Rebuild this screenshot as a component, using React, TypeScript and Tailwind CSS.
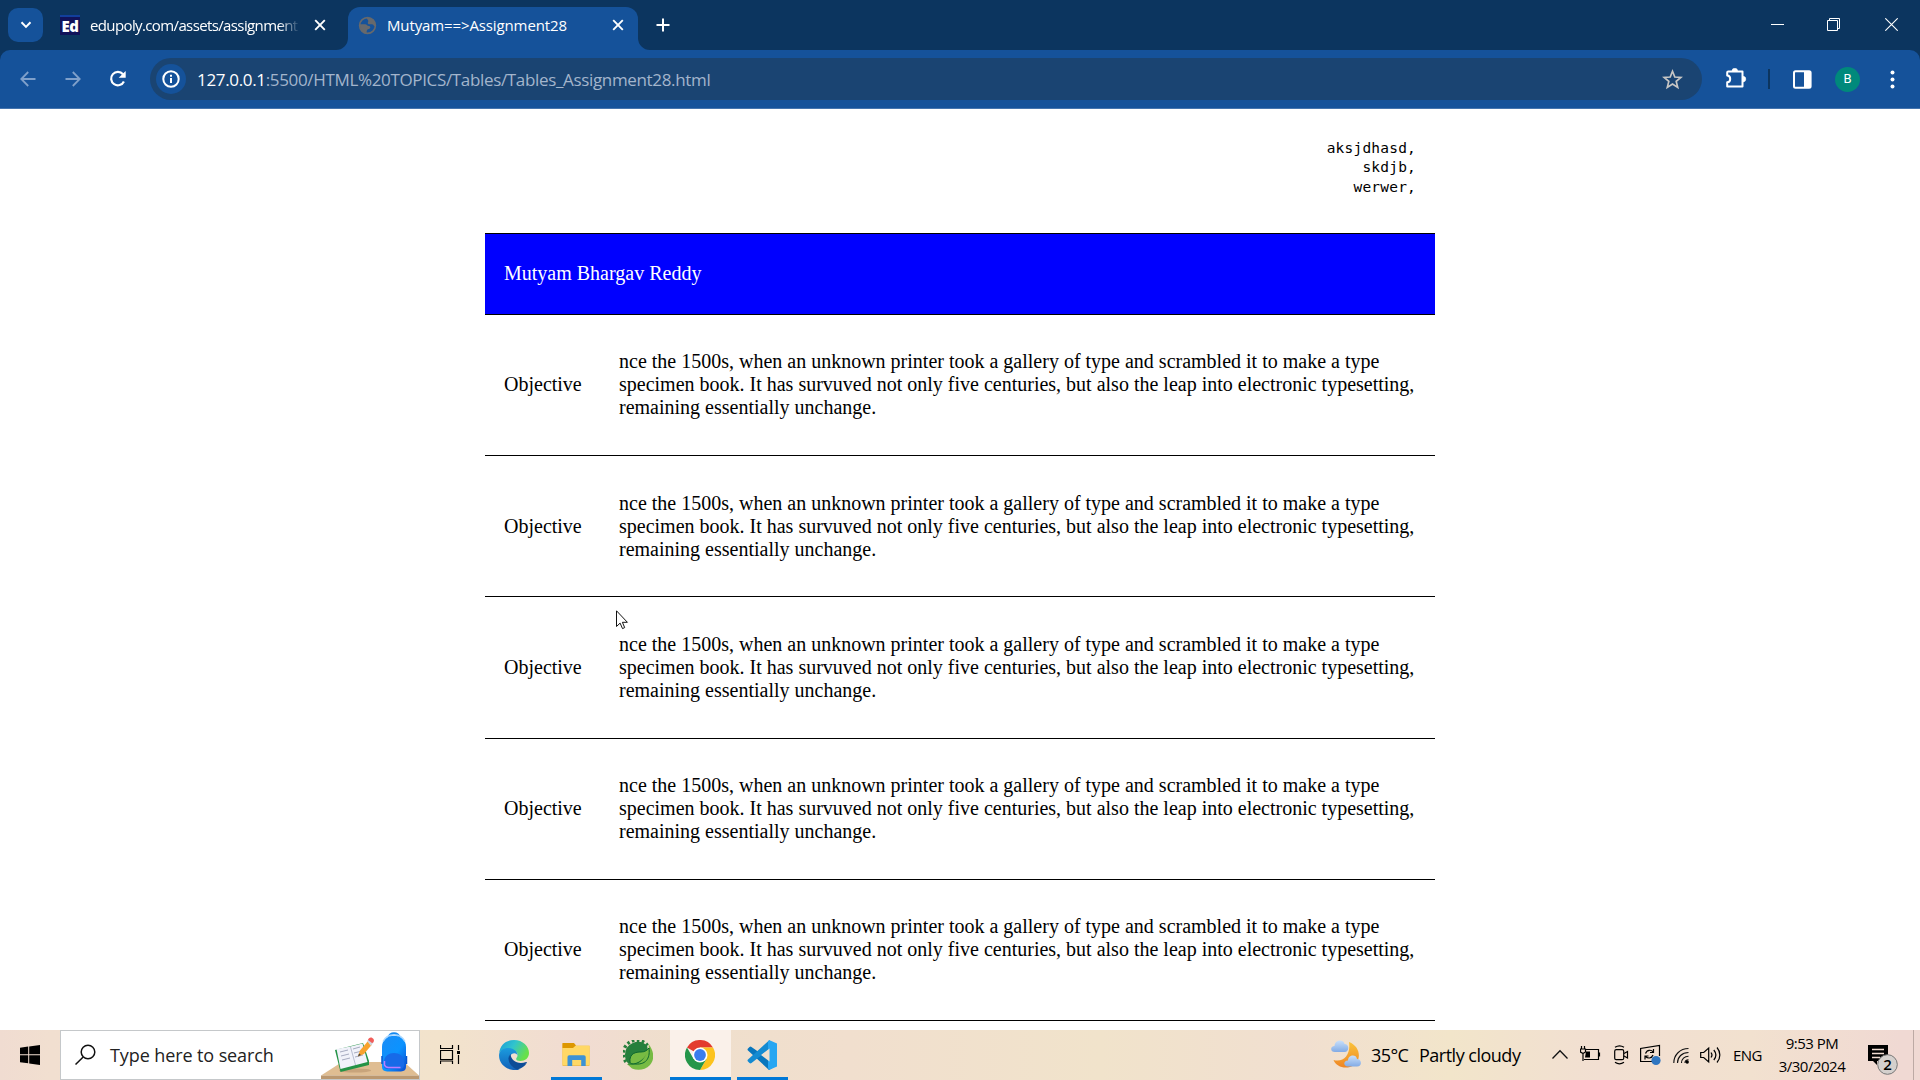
import React from "react";

const entry =
  "nce the 1500s, when an unknown printer took a gallery of type and scrambled it to make a type specimen book. It has survuved not only five centuries, but also the leap into electronic typesetting, remaining essentially unchange.";

const rows = [
  "h-[141px] pt-[35px]",
  "h-[141px] pt-[36px]",
  "h-[142px] pt-[36px]",
  "h-[141px] pt-[35px]",
  "h-[141px] pt-[35px]",
];

function CloseX({ className = "" }: { className?: string }) {
  return (
    <svg className={className} width="12" height="12" viewBox="0 0 12 12" fill="none" stroke="#fff" strokeWidth="1.9">
      <path d="M1.2 1.2 10.8 10.8M10.8 1.2 1.2 10.8" />
    </svg>
  );
}

function TabStrip() {
  return (
    <div className="flex h-[50px] shrink-0 bg-[#0c355f] text-white">
      <div className="ml-2 mt-2 flex h-[34px] w-[35px] items-center justify-center rounded-[10px] bg-[#15529a]">
        <svg width="12" height="8" viewBox="0 0 12 8" fill="none" stroke="#fff" strokeWidth="2">
          <path d="m1.5 1.3 4.5 4.6 4.5-4.6" />
        </svg>
      </div>
      <div className="ml-[17px] mt-[15px] flex h-5 w-5 items-center justify-center border-t-2 border-[#123f9c] bg-[#11135a] font-['Open_Sans',sans-serif] text-[15px] font-extrabold leading-none tracking-[-0.5px]">
        Ed
      </div>
      <div className="ml-[10px] mt-[14px] h-[23px] w-[210px] whitespace-nowrap font-['Open_Sans',sans-serif] text-[15px] leading-[23px] tracking-[-0.62px] [mask-image:linear-gradient(to_right,black_90%,transparent_100%)]">
        edupoly.com/assets/assignment
      </div>
      <CloseX className="ml-[14px] mt-[19px]" />
      <div className="ml-[10px] flex h-[50px]">
        <svg className="mt-[38px]" width="12" height="12" viewBox="0 0 12 12">
          <path d="M0 12A12 12 0 0 0 12 0V12Z" fill="#15529a" />
        </svg>
        <div className="mt-[7px] flex h-[43px] w-[290px] rounded-t-[12px] bg-[#15529a]">
          <svg className="ml-[10px] mt-[9px]" width="19" height="19" viewBox="0 0 19 19">
            <circle cx="9.5" cy="9.5" r="7.9" fill="none" stroke="#67696c" strokeWidth="1.6" />
            <path d="M2 8.2h5.2c1.7 0 2 1.8 3.7 1.9 1.6 0 1.8 1.7.9 2.5-1.2.9-2.6.4-3 2.1l-.4 2.7C4.6 17 1.6 13.2 2 8.200ZM9 1.500c2-.4 5.800.9 7.300 3.400.9 1.700 1.200 4 .7 5.400-1.200-.4-1.700-1.900-3-2.100-1.900-.2-3 .7-4-.5-.8-1.200.6-1.900.2-3.200C9.900 3.500 8.400 2.900 9 1.500Z" fill="#67696c" />
          </svg>
          <div className="ml-[10px] mt-[7px] w-[205px] whitespace-nowrap font-['Open_Sans',sans-serif] text-[15px] leading-[23px] tracking-[-0.12px]">
            Mutyam==&gt;Assignment28
          </div>
          <CloseX className="ml-[20px] mt-[12px]" />
        </div>
        <svg className="mt-[38px]" width="12" height="12" viewBox="0 0 12 12">
          <path d="M0 0A12 12 0 0 0 12 12H0Z" fill="#15529a" />
        </svg>
      </div>
      <svg className="ml-[6px] mt-[18px]" width="14" height="14" viewBox="0 0 14 14" stroke="#fff" strokeWidth="2">
        <path d="M7 .5v13M.5 7h13" />
      </svg>
      <div className="ml-auto flex">
        <svg className="mt-[18px]" width="13" height="13" viewBox="0 0 13 13">
          <path d="M0 6.500h13" stroke="#fff" />
        </svg>
        <svg className="ml-[43px] mt-[18px]" width="13" height="13" viewBox="0 0 13 13" fill="none" stroke="#fff">
          <path d="M.5 2.500h10v10h-10ZM2.500 2.500v-2h10v10h-2" />
        </svg>
        <svg className="ml-[45px] mr-[22px] mt-[18px]" width="13" height="13" viewBox="0 0 13 13" stroke="#fff" strokeWidth="1.1">
          <path d="M.3.3 12.700 12.700M12.700.3.3 12.700" />
        </svg>
      </div>
    </div>
  );
}

function Toolbar() {
  return (
    <div className="shrink-0 bg-[#0c355f]">
      <div className="flex h-[59px] rounded-t-[10px] border-b border-[#4474ae] bg-[#15529a] pb-0 pt-2">
        <div className="flex h-[42px] w-[150px] items-center pl-5">
          <svg width="16" height="16" viewBox="0 0 16 16" fill="none" stroke="#7fa0ca" strokeWidth="1.800">
            <path d="M15.500 8H1.500M8.200 1 1.300 8l6.900 7" />
          </svg>
          <svg className="ml-[29px]" width="16" height="16" viewBox="0 0 16 16" fill="none" stroke="#7fa0ca" strokeWidth="1.800">
            <path d="M.5 8h14M7.800 1l6.900 7-6.900 7" />
          </svg>
          <svg className="ml-7" width="18" height="18" viewBox="0 0 18 18" fill="none" stroke="#fff" strokeWidth="2.200">
            <path d="M14.900 11.500A6.700 6.700 0 1 1 14 4.300" />
            <path d="M9.700 7.700h7V.9L14.300 3.200Z" fill="#fff" stroke="none" />
          </svg>
        </div>
        <div className="flex h-[42px] w-[1552px] items-center rounded-full bg-[#1a4472] pl-[6px]">
          <div className="flex h-[30px] w-[30px] items-center justify-center rounded-full bg-[#15529a]">
            <svg width="18" height="18" viewBox="0 0 18 18" fill="none" stroke="#fff" strokeWidth="2">
              <circle cx="9" cy="9" r="7.700" />
              <path d="M9 8v5M9 4.700v2" />
            </svg>
          </div>
          <div className="ml-[11px] mt-px whitespace-nowrap font-['Open_Sans',sans-serif] text-[17px] tracking-[-0.34px] text-[#a3b5cc]">
            <span className="text-white">127.0.0.1</span>:5500/HTML%20TOPICS/Tables/Tables_Assignment28.html
          </div>
          <svg className="ml-auto mr-[19px]" width="21" height="21" viewBox="0 0 21 21" fill="none" stroke="#c8c7c5" strokeWidth="1.700">
            <path d="m10.500 2.300 2.300 5.700 6.100.4-4.700 4 1.500 6-5.200-3.300-5.200 3.300 1.500-6-4.700-4 6.100-.4Z" />
          </svg>
        </div>
        <div className="flex h-[42px] flex-1 items-center">
          <svg className="ml-[23px]" width="22" height="22" viewBox="0 0 22 22">
            <path d="M3.300 3.500h14.200v15H2.200v-4.200c4-.2 4-6.600 0-6.800V4.500a1 1 0 0 1 1.100-1Z" fill="none" stroke="#fff" strokeWidth="2" strokeLinejoin="round" />
            <path d="M7 3a2.800 2.800 0 0 1 5.600 0ZM18 8.300a2.800 2.800 0 0 1 0 5.600Z" fill="#fff" stroke="#fff" strokeWidth=".5" />
          </svg>
          <div className="ml-[21px] h-5 w-[2px] bg-[#0c355f]" />
          <svg className="ml-[23px]" width="19" height="19" viewBox="0 0 19 19">
            <rect x="1" y="1.200" width="16.600" height="16.600" rx="1.500" fill="none" stroke="#fff" strokeWidth="2" />
            <path d="M11 1h6.500v17H11Z" fill="#fff" />
          </svg>
          <div className="ml-[23px] flex h-[25px] w-[25px] items-center justify-center rounded-full bg-[#00897b] font-['Roboto',sans-serif] text-[13px] text-white">
            B
          </div>
          <svg className="ml-[30px]" width="5" height="19" viewBox="0 0 5 19" fill="#fff">
            <circle cx="2.500" cy="2.500" r="2" />
            <circle cx="2.500" cy="9.500" r="2" />
            <circle cx="2.500" cy="16.400" r="2" />
          </svg>
        </div>
      </div>
    </div>
  );
}

function Resume() {
  return (
    <div className="mx-auto w-[950px] font-['Liberation_Serif',serif] text-[20px] leading-[23px] text-black">
      <pre className="h-[124px] pr-[19px] pt-[30px] text-right font-['DejaVu_Sans_Mono',monospace] text-[14.500px] leading-[19.300px] tracking-[0.200px]">
        {"aksjdhasd,\nskdjb,\nwerwer,"}
      </pre>
      <div className="flex h-[81px] items-center border-t border-black bg-[#0000ff] pb-[2px] pl-[19px] text-white">
        Mutyam Bhargav Reddy
      </div>
      {rows.map((size, i) => (
        <div key={i} className={`${size} flex border-t border-black pl-[19px]`}>
          <div className="w-[115px] pt-[23px]">Objective</div>
          <div className="w-[800px]">{entry}</div>
        </div>
      ))}
      <div className="border-t border-black" />
    </div>
  );
}

function SchoolArt() {
  return (
    <svg className="ml-auto" width="98" height="48" viewBox="0 0 98 48">
      <defs>
        <linearGradient id="bag" x1="0" y1="0" x2="1" y2="1">
          <stop offset="0" stopColor="#1a8cf6" />
          <stop offset=".55" stopColor="#0b93ff" />
          <stop offset="1" stopColor="#0a4bd0" />
        </linearGradient>
      </defs>
      <path d="M21 31h62L98 44.500H0Z" fill="#dfbd92" />
      <path d="M0 44.500h98V48H0Z" fill="#bb9870" />
      <ellipse cx="34" cy="39.500" rx="16" ry="2" fill="#bd9a72" opacity=".7" />
      <path d="m14 19 5.500 22 28.500-7v-4L42 12Z" fill="#249346" />
      <path d="m15.500 18 4 20 27-7-5-18.500-12 3Z" fill="#f1f2fa" />
      <path d="m29.500 16 5 18" stroke="#b8bdd0" />
      <path d="m19 21 8-2M20 25l8-2M21 29l8-2M32 18l7-2M33 22l8-2M34 26l8-2" stroke="#a6abc0" />
      <path d="m37 25.500 2-6L47 10l4 3.500-8 9.500Z" fill="#f8a22d" />
      <path d="m46 10 2.500-2.500 4 3.500-2.500 4Z" fill="#cfd6df" />
      <path d="M47 9c.5-3 4-3.500 5.500-1S51.500 12 51 12Z" fill="#f25d59" />
      <path d="m37 25.500 1-3 2 1.500Z" fill="#444" />
      <path d="M68 6.500c0-5.500 10-5.500 10 0" fill="none" stroke="#1689ef" strokeWidth="2.500" />
      <path d="M61 36V16C61 1 85 1 85 16v20q0 4-5 4.500H66q-5-.5-5-4.500Z" fill="url(#bag)" />
      <path d="M62 10.500c5-9 17-9 22 0" fill="none" stroke="#a9d7ff" strokeWidth="1.500" />
      <path d="M63 31c0-12 20-12 20 0v4q-1 3-4 3H66q-3 0-3-3Z" fill="#176ae8" />
      <path d="M63.500 30v4q1 2.500 4 2.500h12" fill="none" stroke="#bb7dff" strokeWidth="1.500" />
      <path d="M61 25v8M85.500 25v8" stroke="#0754ce" strokeWidth="1.500" />
    </svg>
  );
}

function Running({ width, active, children }: { width: string; active?: boolean; children: React.ReactNode }) {
  return (
    <div className={`${width} flex h-[50px] flex-col justify-between ${active ? "bg-[#faf1ea]" : ""}`}>
      <div className="flex justify-center pr-[2px] pt-[10px]">{children}</div>
      <div className="h-[3px] w-full bg-[#0078d7]" />
    </div>
  );
}

function Taskbar() {
  return (
    <div className="flex h-[50px] shrink-0 bg-[linear-gradient(90deg,#f0dcd1_0,#f1dfd0_50px,#f2e3cc_440px,#f1dcd2_580px,#efdfcc_680px,#f1dfce_850px,#f1e3cb_1100px,#f1dfd0_1300px,#f2e5ca_1450px,#f2dfd2_1600px,#f2e1cf_1750px,#f0d9d3_1900px)] font-['Open_Sans',sans-serif] text-black">
      <div className="flex w-[60px] items-center justify-center">
        <svg width="20" height="20" viewBox="0 0 20 20">
          <path d="M0 2.800 8.200 1.600v7.700H0ZM9.200 1.400 20 0v9.300H9.200ZM0 10.300h8.200v8L0 17.200ZM9.200 10.300H20V20L9.200 18.500Z" />
        </svg>
      </div>
      <div className="flex h-[50px] w-[360px] border border-[#c5c8ca] bg-white">
        <svg className="ml-[14px] mt-[13px]" width="21" height="21" viewBox="0 0 21 21" fill="none" stroke="#111" strokeWidth="1.500">
          <circle cx="13" cy="8" r="6.800" />
          <path d="M8.200 13 .5 20.500" />
        </svg>
        <div className="ml-[14px] mt-[10px] whitespace-nowrap text-[18px] leading-[28px] tracking-[-0.1px] text-[#222]">Type here to search</div>
        <SchoolArt />
      </div>
      <svg className="ml-5 mt-[15px]" width="20" height="20" viewBox="0 0 20 20" fill="none" stroke="#000" strokeWidth="1.200">
        <path d="M.5 0v3.500h12V0M.5 5.500h12v9H.5ZM.5 19v-3h12v3M18.500 0v5M18.500 10v9" />
        <path d="M17 6h3v3h-3Z" fill="#000" stroke="none" />
      </svg>
      <svg className="ml-[39px] mt-[10px]" width="30" height="30" viewBox="0 0 30 30">
        <defs>
          <linearGradient id="edgeTop" x1="0" y1="0" x2="1" y2=".45">
            <stop offset="0" stopColor="#189bd8" />
            <stop offset=".5" stopColor="#31c4cd" />
            <stop offset="1" stopColor="#67e04a" />
          </linearGradient>
          <linearGradient id="edgeLow" x1="0" y1="0" x2="0" y2="1">
            <stop offset="0" stopColor="#1b9bde" />
            <stop offset="1" stopColor="#1261b8" />
          </linearGradient>
        </defs>
        <path d="M.2 13C1 5 7 0 15 0c9 0 15 6.500 15 13 0 5-4 8-8.500 8-4 0-5-1.500-4-3 3-4-.5-8.500-6-8.500C6 9.500 2 10 .2 13Z" fill="url(#edgeTop)" />
        <path d="M.1 14.500C.6 10 5 7.800 10 8c5 .3 9 4 8.500 7.500-1-3-6-3-7.500 1-2 6 3 12 10 13C9 32.500-.8 24 .1 14.500Z" fill="url(#edgeLow)" />
        <path d="M11.500 14C8 18 10 25 17 26c4 .7 8-.5 10.700-3.300.5-.5 0-1-.6-.7-8 3-15-1-15.600-8Z" fill="#0d4c97" />
        <path d="M10 16c-2 6 3 12 8.500 13.500 4-1 7.500-3.500 9.200-6.500C20 27 11 24 10 16Z" fill="#0d4c97" />
      </svg>
      <div className="w-[22px]" />
      <Running width="w-[51px]">
        <svg width="30" height="30" viewBox="0 0 30 30">
          <path d="M1.500 3.500H12l2.500 2.300H28.500v20h-27Z" fill="#f3b629" />
          <path d="M1.500 3.500Q1.500 3 2 3h11l2 2.500-2.500 2.500h-11Z" fill="#dd9700" />
          <path d="M1.500 8H12l2.500-2.200h14V25h-27Z" fill="#ffd865" />
          <path d="M6.500 26V17q0-1.800 1.800-1.800h14.600q1.800 0 1.800 1.800v9h-4.500v-6h-9v6Z" fill="#3c92d5" />
        </svg>
      </Running>
      <svg className="ml-[21px] mt-[10px]" width="30" height="30" viewBox="0 0 30 30">
        <path d="M2 15A13 13 0 0 1 24 5.500L26 15 15 28A13 13 0 0 1 2 15Z" fill="#267f3c" />
        <path d="M3 22A13.400 13.400 0 0 1 24.500 5.500" fill="none" stroke="#267f3c" strokeWidth="3.400" strokeDasharray="2.600 2.400" />
        <path d="M25.500 4C31 11 32 19 27 25c-5 5-12 6-18 3.500L4 24c12 0 24-6 21.500-20Z" fill="#77bb43" />
        <path d="M7 22.500C6 13 13 12 18 12c4 0 6.500-2 8-4 1 8-1 17-14 16-3 0-4-.5-5-1.500Z" fill="#77bb43" stroke="#0d672e" />
        <path d="M4 24.500c9 0 17-4 20-12-4 10-11 13-20 12Z" fill="#0d672e" />
      </svg>
      <div className="w-[17px]" />
      <Running width="w-[61px]" active>
        <svg width="30" height="30" viewBox="0 0 30 30">
          <path d="M15 15 2 7.500A15 15 0 0 1 28 7.500H15Z" fill="#e33b2e" />
          <path d="M15 7.500h13A15 15 0 0 1 15 30l6.500-11.250Z" fill="#fcc31e" />
          <path d="M2 7.500A15 15 0 0 0 15 30l6.500-11.250L8.500 18.750Z" fill="#24964a" />
          <circle cx="15" cy="15" r="7.500" fill="#fff" />
          <circle cx="15" cy="15" r="5.900" fill="#3b7ded" />
        </svg>
      </Running>
      <div className="w-[6px]" />
      <Running width="w-[51px]">
        <svg width="30" height="30" viewBox="0 0 30 30">
          <path d="M1 10.500q-1-1 0-2L2.500 7q1-.8 2 0L30 25l-8 5Z" fill="#0876bd" />
          <path d="M1 19.500q-1 1 0 2L2.500 23q1 .8 2 0L22.500 9V0Z" fill="#148bd2" />
          <path d="M22 0 30 3.500v23L22 30l-1-2V2Z" fill="#27a6f2" />
          <path d="M22.500 8.500v13L14 15Z" fill="#f0dfce" />
        </svg>
      </Running>
      <div className="ml-auto flex w-[589px]">
        <svg className="mt-[10px]" width="30" height="30" viewBox="0 0 30 30">
          <defs>
            <linearGradient id="moon" x1="0" y1="0" x2="0" y2="1">
              <stop offset="0" stopColor="#fac33a" />
              <stop offset="1" stopColor="#ee8525" />
            </linearGradient>
            <linearGradient id="cloud" x1="0" y1="0" x2="0" y2="1">
              <stop offset="0" stopColor="#c9e0fb" />
              <stop offset="1" stopColor="#82abe5" />
            </linearGradient>
          </defs>
          <path d="M18 2C31 7 31 23 19 27 12 29 5 26 2.500 20 13 23 20 14 18 2Z" fill="url(#moon)" />
          <path d="M4 12C-1 12-1 6 3.500 6 4-1 13-1 13.500 4c5 0 5 8 0 8Z" fill="url(#cloud)" />
          <path d="M17 26.500c-5 0-5-6 0-6 0-6 8.500-6.500 9-1.500 5 0 5.500 7.500 0 7.500Z" fill="url(#cloud)" />
        </svg>
        <div className="ml-[10px] mt-[11px] w-[48px] whitespace-nowrap text-[18px] leading-[28px] tracking-[-0.6px]">35°C</div>
        <div className="mt-[11px] w-[133px] whitespace-nowrap text-[18px] leading-[28px] tracking-[-0.5px]">Partly cloudy</div>
        <svg className="mt-[19px]" width="16" height="11" viewBox="0 0 16 11" fill="none" stroke="#111" strokeWidth="1.300">
          <path d="m.5 9.500 7.500-7.800 7.500 7.800" />
        </svg>
        <svg className="ml-3 mt-[16px]" width="21" height="18" viewBox="0 0 21 18" fill="none" stroke="#000" strokeWidth="1.200">
          <path d="M6 3.500h12.500v10H4M19.500 6.500v4M1.500 0v3M4.500 0v3M.5 3h5v3L3 7.500.5 6ZM3 7.500V15" />
          <path d="M6 5.500h4v6H5Z" fill="#000" stroke="none" />
        </svg>
        <svg className="ml-[13px] mt-[15px]" width="15" height="20" viewBox="0 0 15 20" fill="none" stroke="#000" strokeWidth="1.200">
          <rect x=".7" y="4.700" width="9" height="10" rx="1.500" />
          <path d="m10 8.500 3.500-2v6.500L10 11M1 2.300c3-2 6-2 9 0M1 17.300c3 2 6 2 9 0" />
        </svg>
        <svg className="ml-[11px] mt-[14px]" width="21" height="22" viewBox="0 0 21 22" fill="none" stroke="#000" strokeWidth="1.200">
          <path d="M13 17.500H.6v-13L19.500 1.500V12" />
          <path d="M5.500 9.500c1.500-4 6-4 7.500-1.500M13.500 5v3.500H10M13 11c-1.500 4-5.500 3.500-7.500 1.500M5 15.500V12h3.500" />
          <circle cx="16" cy="16.500" r="4.600" fill="#2f76c1" stroke="none" />
        </svg>
        <svg className="ml-3 mt-[17px]" width="17" height="17" viewBox="0 0 17 17" fill="none" stroke="#111" strokeWidth="1.100">
          <path d="M.8 16C.8 8 7 1.500 15.500 1.500M4.500 16c0-6 4.500-10.500 11-10.500M8.500 16c0-4 3-6.800 7-6.800M12 16c0-2 1.500-3.200 3.500-3.200" />
          <circle cx="14.200" cy="15" r="1.700" fill="#000" stroke="none" />
        </svg>
        <svg className="ml-[10px] mt-[16px]" width="21" height="18" viewBox="0 0 21 18" fill="none" stroke="#000" strokeWidth="1.200">
          <path d="M.7 6.500h3l5-4.500v14l-5-4.500h-3ZM11 6.500c1.200 1.500 1.200 3.500 0 5M13.800 4c2.500 3 2.500 7 0 10M17 1.500c3.800 4.500 3.800 10.500 0 15" />
        </svg>
        <div className="ml-[12px] mt-[14px] w-[45px] whitespace-nowrap text-[15px] leading-[22px] tracking-[-0.6px]">ENG</div>
        <div className="mt-[2px] w-[68px] whitespace-nowrap text-center text-[15px] leading-[23px] tracking-[-0.5px]">
          9:53 PM
          <br />
          3/30/2024
        </div>
        <svg className="ml-[22px] mt-[15px]" width="31" height="31" viewBox="0 0 31 31">
          <path d="M0 0h20v16H9v4l-4-4H0Z" />
          <path d="M4 4.500h12M4 8.500h12M4 12.500h8" stroke="#f2ddd2" strokeWidth="1.300" />
          <circle cx="19.500" cy="19.500" r="9.800" fill="#d4d0cd" stroke="#777" />
          <text x="19.500" y="25" textAnchor="middle" fontSize="15" fontWeight="600" fontFamily="Open Sans">2</text>
        </svg>
        <div className="ml-[14px] w-px bg-[#bdaaa4]" />
      </div>
    </div>
  );
}

export default function App() {
  return (
    <div className="relative flex h-[1080px] w-[1920px] flex-col overflow-hidden bg-white">
      <TabStrip />
      <Toolbar />
      <main className="min-h-0 flex-1 overflow-hidden bg-white">
        <Resume />
      </main>
      <Taskbar />
      <svg className="absolute left-[616px] top-[610px]" width="13" height="20" viewBox="0 0 13 20">
        <path d="M.5.800v15.700l3.600-3.400 2.400 5.500 2.200-1-2.300-5.300h5Z" fill="#fff" stroke="#111" />
      </svg>
    </div>
  );
}
